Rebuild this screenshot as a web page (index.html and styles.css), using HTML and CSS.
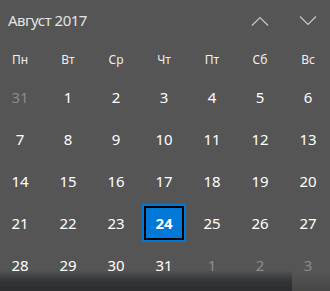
FILE: index.html
```html
<!DOCTYPE html>
<html lang="ru">
<head>
  <meta charset="UTF-8" />
  <title>Календарь</title>
  <link rel="stylesheet" href="styles.css">
</head>
<body>
  <div class="calendar">
    <div class="head">
      <span class="month">Август 2017</span>
      <div class="arrows">
        <a class="arrow"><svg width="18" height="10" viewBox="0 0 18 10"><polyline points="1,9.5 9,1.5 17,9.5" /></svg></a>
        <a class="arrow"><svg width="18" height="10" viewBox="0 0 18 10"><polyline points="1,0.5 9,8.5 17,0.5" /></svg></a>
      </div>
    </div>
    <div class="grid weekdays">
      <span>Пн</span><span>Вт</span><span>Ср</span><span>Чт</span><span>Пт</span><span>Сб</span><span>Вс</span>
    </div>
    <div class="grid days">
      <span class="other">31</span><span>1</span><span>2</span><span>3</span><span>4</span><span>5</span><span>6</span>
      <span>7</span><span>8</span><span>9</span><span>10</span><span>11</span><span>12</span><span>13</span>
      <span>14</span><span>15</span><span>16</span><span>17</span><span>18</span><span>19</span><span>20</span>
      <span>21</span><span>22</span><span>23</span><span class="today">24</span><span>25</span><span>26</span><span>27</span>
      <span>28</span><span>29</span><span>30</span><span>31</span><span class="other">1</span><span class="other">2</span><span class="other">3</span>
    </div>
  </div>
</body>
</html>
```

FILE: styles.css
```css
*,*::before,*::after{box-sizing:border-box;margin:0;padding:0}
html,body{height:100%}
body{font-family:"Noto Sans","Open Sans",Arial,sans-serif;color:#fff;overflow:hidden;
  background:linear-gradient(to bottom,rgba(40,42,46,0) 0,rgba(40,42,46,0) 270px,rgba(44,46,50,.85) 282px,#2c2e32 291px) no-repeat 0 0/292px 100%,
  linear-gradient(to bottom,rgba(60,60,62,0) 0,rgba(60,60,62,0) 272px,rgba(66,66,68,.8) 291px) no-repeat 0 0/100% 100%,
  #555}
a{cursor:pointer}
.calendar{width:330px}
/* header */
.head{display:flex;justify-content:space-between;align-items:center;height:40px;padding-left:8px}
.month{font-size:15px;color:#e4e4e4;letter-spacing:-.5px}
.arrows{display:flex;gap:30px;padding-right:13px;padding-top:1px}
.arrow{display:block;line-height:0}
.arrow svg polyline{fill:none;stroke:#c8c8c8;stroke-width:1.2}
/* grid */
.grid{display:grid;grid-template-columns:repeat(7,44px);column-gap:4px;margin-left:-2px}
.grid span{display:flex;align-items:center;justify-content:center}
.weekdays{height:38px}
.weekdays span{font-size:12px;color:#f0f0f0}
.days{grid-auto-rows:38px;row-gap:4px}
.days span{font-size:15px;color:#fff}
.days .other{color:#8c8c8c}
.days .today{background:#0078d7;border:2px solid #0078d7;box-shadow:inset 0 0 0 2px #000;font-weight:700}
```
